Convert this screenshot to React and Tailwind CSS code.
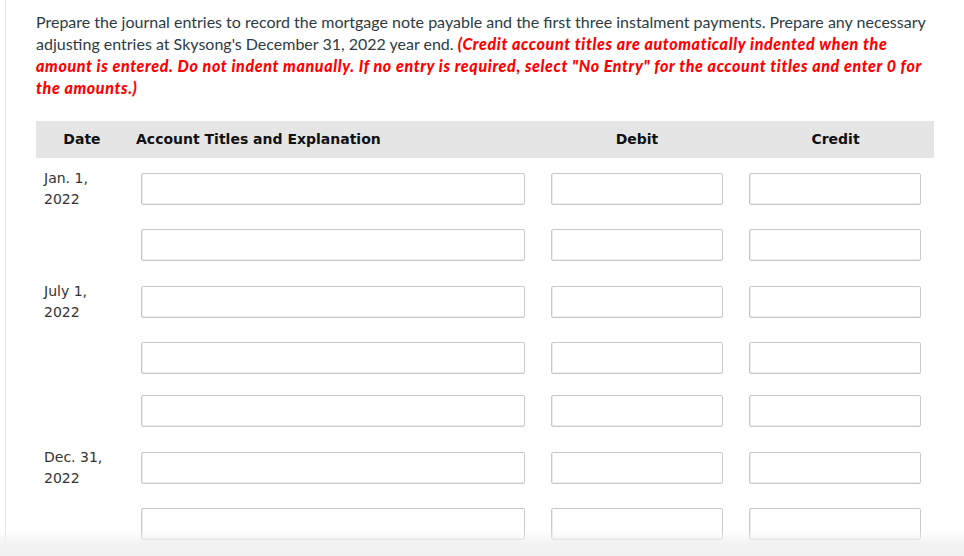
import React from 'react';

const rows = [
  { date: ['Jan. 1,', '2022'], h: 'h-[56px]' },
  { date: null, h: 'h-[57px]' },
  { date: ['July 1,', '2022'], h: 'h-[56px]' },
  { date: null, h: 'h-[53px]' },
  { date: null, h: 'h-[57px]' },
  { date: ['Dec. 31,', '2022'], h: 'h-[56px]' },
  { date: null, h: 'h-[56px]' },
];

function Field({ className }) {
  return (
    <input
      type="text"
      className={`h-[32px] w-full rounded-[2px] border border-[#c9c9c9] bg-white outline-none shadow-[inset_1px_-1px_0_#ececec] ${className || ''}`}
    />
  );
}

export default function App() {
  return (
    <div className="relative h-[556px] overflow-hidden bg-white">
      <div className="ml-[5px] h-full border-l border-[#e4e4e4] pl-[30px] pt-[11px]">
        {/* Instructions */}
        <p className="w-[898px] font-['Lato',sans-serif] text-[16px] leading-[22px] text-[#2d3b45]">
          Prepare the journal entries to record the mortgage note payable and the first three instalment payments. Prepare any necessary adjusting entries at Skysong's December 31, 2022 year end.{' '}
          <span className="font-black italic tracking-[0.63px] text-[#ff0000]">
            (Credit account titles are automatically indented when the amount is entered. Do not indent manually. If no entry is required, select "No Entry" for the account titles and enter 0 for the amounts.)
          </span>
        </p>

        {/* Journal table */}
        <div className="mt-[22px] w-[898px] font-['DejaVu_Sans',sans-serif] text-[14px]">
          <div className="grid h-[37px] grid-cols-[92px_409px_200px_197px] items-center bg-[#e5e5e5] font-bold text-[#111]">
            <div className="text-center">Date</div>
            <div className="pl-[8px]">Account Titles and Explanation</div>
            <div className="text-center">Debit</div>
            <div className="text-center">Credit</div>
          </div>

          <div className="mt-[15px]">
            {rows.map((row, i) => (
              <div key={i} className={`grid grid-cols-[92px_409px_200px_197px] items-start ${row.h}`}>
                <div className="-mt-[5px] pl-[8px] leading-[21px] text-[#333]">
                  {row.date && (
                    <>
                      <div>{row.date[0]}</div>
                      <div>{row.date[1]}</div>
                    </>
                  )}
                </div>
                <div className="pl-[13px] pr-[12px]">
                  <Field />
                </div>
                <div className="px-[14px]">
                  <Field />
                </div>
                <div className="pl-[12px] pr-[13px]">
                  <Field />
                </div>
              </div>
            ))}
          </div>
        </div>
      </div>

      {/* bottom fade */}
      <div className="pointer-events-none absolute inset-x-0 bottom-0 h-[26px] bg-gradient-to-b from-[rgba(242,242,242,0)] via-[rgba(242,242,242,0.9)] to-[#f1f1f1]" />
    </div>
  );
}
